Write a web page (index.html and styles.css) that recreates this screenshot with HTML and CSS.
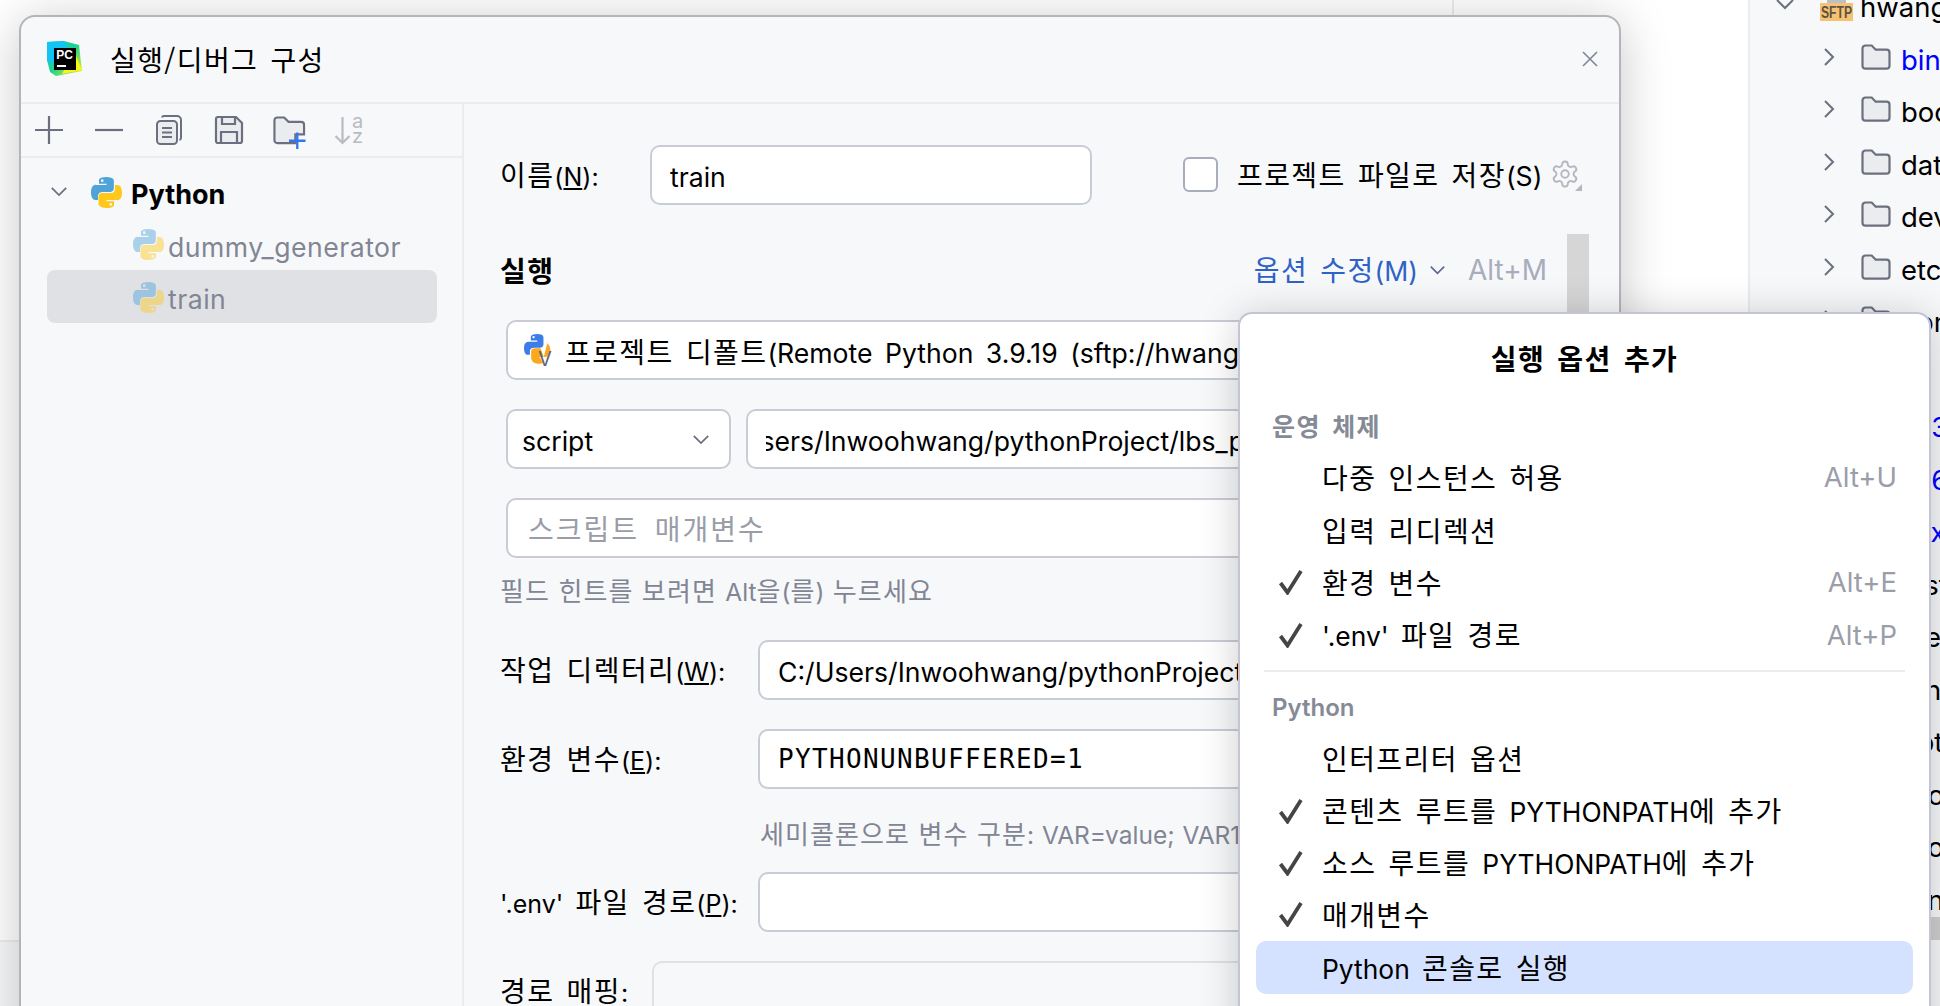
FILE: index.html
```html
<!DOCTYPE html>
<html lang="ko">
<head>
<meta charset="utf-8">
<title>실행/디버그 구성</title>
<link rel="stylesheet" href="styles.css">
</head>
<body>
<svg class="defs" width="0" height="0" aria-hidden="true">
  <defs>
    <symbol id="py" viewBox="0 0 24 24">
      <path fill="#4fa3d6" fill-rule="evenodd" d="M11.9 0C5.8 0 6.2 2.6 6.2 2.6v2.7h5.8v.8H3.9S0 5.7 0 11.9s3.4 6 3.4 6h2v-2.9s-.1-3.4 3.4-3.4h5.7s3.2.1 3.2-3.1V3.2S18.3 0 11.9 0zM8.7 1.8a1 1 0 1 1 0 2.1 1 1 0 0 1 0-2.1z"/>
      <path fill="#ffc81a" fill-rule="evenodd" d="M12.1 24c6.1 0 5.7-2.6 5.7-2.6v-2.7h-5.8v-.8h8.1s3.9.4 3.9-5.8-3.4-6-3.4-6h-2v2.9s.1 3.4-3.4 3.4H9s-3.2-.1-3.2 3.1v5.3S5.7 24 12.1 24zm3.2-1.8a1 1 0 1 1 0-2.1 1 1 0 0 1 0 2.1z"/>
    </symbol>
    <symbol id="folder" viewBox="0 0 30 26">
      <path fill="#ebecf0" stroke="#6c707e" stroke-width="2.200" d="M1.5 4.500a3 3 0 0 1 3-3h6.200l4 4.200h10.800a3 3 0 0 1 3 3v13a3 3 0 0 1-3 3h-21a3 3 0 0 1-3-3z"/>
    </symbol>
    <symbol id="chev-r" viewBox="0 0 12 20">
      <path fill="none" stroke="#6c707e" stroke-width="2" d="M2 2l8 8-8 8"/>
    </symbol>
    <symbol id="chev-d" viewBox="0 0 20 12">
      <path fill="none" stroke="#6c707e" stroke-width="2" d="M2 2l8 8 8-8"/>
    </symbol>
    <symbol id="check" viewBox="0 0 26 26">
      <path fill="none" stroke="#454545" stroke-width="3.800" d="M2.500 14l7 9.500L23 2"/>
    </symbol>
  </defs>
</svg>

<div class="ide">
  <div class="editor">
    <div class="editor-rule"></div>
    <div class="editor-foot"></div>
  </div>
  <div class="project">
    <div class="tree-row tree-root">
      <svg class="tree-down"><use href="#chev-d"/></svg>
      <svg class="sftp" viewBox="0 0 33 30">
        <rect x="7" y="0" width="19" height="12" fill="#b9c0c9"/>
        <rect x="0" y="12" width="33" height="18" fill="#f5c271"/>
        <text x="1" y="27" class="sftp-text" textLength="31" lengthAdjust="spacingAndGlyphs">SFTP</text>
      </svg>
      <span class="tree-name">hwang</span>
    </div>
    <div class="tree-row"><svg class="tree-chev"><use href="#chev-r"/></svg><svg class="tree-folder"><use href="#folder"/></svg><span class="tree-name link">bin</span></div>
    <div class="tree-row"><svg class="tree-chev"><use href="#chev-r"/></svg><svg class="tree-folder"><use href="#folder"/></svg><span class="tree-name">boot</span></div>
    <div class="tree-row"><svg class="tree-chev"><use href="#chev-r"/></svg><svg class="tree-folder"><use href="#folder"/></svg><span class="tree-name">data</span></div>
    <div class="tree-row"><svg class="tree-chev"><use href="#chev-r"/></svg><svg class="tree-folder"><use href="#folder"/></svg><span class="tree-name">dev</span></div>
    <div class="tree-row"><svg class="tree-chev"><use href="#chev-r"/></svg><svg class="tree-folder"><use href="#folder"/></svg><span class="tree-name">etc</span></div>
    <div class="tree-row"><svg class="tree-chev"><use href="#chev-r"/></svg><svg class="tree-folder"><use href="#folder"/></svg><span class="tree-name">home</span></div>
    <div class="tree-row"><svg class="tree-chev"><use href="#chev-r"/></svg><svg class="tree-folder"><use href="#folder"/></svg><span class="tree-name link">lib</span></div>
    <div class="tree-row"><svg class="tree-chev"><use href="#chev-r"/></svg><svg class="tree-folder"><use href="#folder"/></svg><span class="tree-name link">lib32</span></div>
    <div class="tree-row"><svg class="tree-chev"><use href="#chev-r"/></svg><svg class="tree-folder"><use href="#folder"/></svg><span class="tree-name link">lib64</span></div>
    <div class="tree-row"><svg class="tree-chev"><use href="#chev-r"/></svg><svg class="tree-folder"><use href="#folder"/></svg><span class="tree-name link">libx32</span></div>
    <div class="tree-row"><svg class="tree-chev"><use href="#chev-r"/></svg><svg class="tree-folder"><use href="#folder"/></svg><span class="tree-name">lost+found</span></div>
    <div class="tree-row"><svg class="tree-chev"><use href="#chev-r"/></svg><svg class="tree-folder"><use href="#folder"/></svg><span class="tree-name">media</span></div>
    <div class="tree-row"><svg class="tree-chev"><use href="#chev-r"/></svg><svg class="tree-folder"><use href="#folder"/></svg><span class="tree-name">mnt</span></div>
    <div class="tree-row"><svg class="tree-chev"><use href="#chev-r"/></svg><svg class="tree-folder"><use href="#folder"/></svg><span class="tree-name">opt</span></div>
    <div class="tree-row"><svg class="tree-chev"><use href="#chev-r"/></svg><svg class="tree-folder"><use href="#folder"/></svg><span class="tree-name">proc</span></div>
    <div class="tree-row"><svg class="tree-chev"><use href="#chev-r"/></svg><svg class="tree-folder"><use href="#folder"/></svg><span class="tree-name">root</span></div>
    <div class="tree-row"><svg class="tree-chev"><use href="#chev-r"/></svg><svg class="tree-folder"><use href="#folder"/></svg><span class="tree-name">run</span></div>
    <div class="project-scroll"></div>
  </div>
</div>

<section class="dialog">
  <header class="dialog-head">
    <svg class="logo" viewBox="0 0 35 35">
      <defs>
        <linearGradient id="lg" x1="0" y1="0" x2="1" y2="1">
          <stop offset="0" stop-color="#13c5f2"/>
          <stop offset=".5" stop-color="#1fd38c"/>
          <stop offset="1" stop-color="#fcf21c"/>
        </linearGradient>
      </defs>
      <path fill="url(#lg)" d="M0 1l17-1 15 4 3 26-26 5-6-4-3-12z"/>
      <path fill="#13c5f2" d="M0 1l17-1 4 8-16 14-5-2z"/>
      <path fill="#fcf21c" d="M27 10l8 19-20 4z"/>
      <rect x="7" y="7" width="22" height="22" fill="#000"/>
      <text x="9.200" y="18.400" class="logo-text">PC</text>
      <rect x="10" y="24" width="9" height="2" fill="#fff"/>
    </svg>
    <h1 class="dialog-title">실행/디버그 구성</h1>
    <svg class="close" viewBox="0 0 16 16"><path fill="none" stroke="#818594" stroke-width="1.600" d="M1 1l14 14M15 1L1 15"/></svg>
  </header>
  <div class="dialog-body">
    <aside class="side">
      <div class="toolbar">
        <svg class="tool" viewBox="0 0 30 30"><path fill="none" stroke="#6c707e" stroke-width="2.200" d="M15 1v28M1 15h28"/></svg>
        <svg class="tool" viewBox="0 0 30 30"><path fill="none" stroke="#6c707e" stroke-width="2.200" d="M1 15h28"/></svg>
        <svg class="tool" viewBox="0 0 30 30"><g fill="none" stroke="#6c707e" stroke-width="2"><rect x="3" y="6" width="20" height="23" rx="3.500" fill="#ebecf0"/><path d="M8 2.500a2 2 0 0 1 2-1.500h13a4 4 0 0 1 4 4v18a2 2 0 0 1-1.500 2"/><path d="M8 13h10M8 17.500h10M8 22h10"/></g></svg>
        <svg class="tool" viewBox="0 0 30 30"><g fill="none" stroke="#6c707e" stroke-width="2.200"><path d="M4 2h18l6 6v18a2 2 0 0 1-2 2H4a2 2 0 0 1-2-2V4a2 2 0 0 1 2-2z" fill="#ebecf0"/><path d="M8 2v7h13V2M7 28V17h16v11"/></g></svg>
        <svg class="tool tool-folder" viewBox="0 0 34 34"><path fill="#ebecf0" stroke="#6c707e" stroke-width="2.200" d="M1.500 4.500a3 3 0 0 1 3-3h7l4.500 4.500h13a3 3 0 0 1 3 3v10h-9v9h-18.500a3 3 0 0 1-3-3z"/><path fill="none" stroke="#3574f0" stroke-width="2.400" d="M25 17v17M16.500 25.500h17"/></svg>
        <svg class="tool" viewBox="0 0 30 30"><path fill="none" stroke="#b9bbc2" stroke-width="2.200" d="M8.500 2v26M1.500 21l7 7 7-7"/><text x="18" y="13" class="sort-text">a</text><text x="18" y="28" class="sort-text">z</text></svg>
      </div>
      <div class="configs">
        <div class="config config-group">
          <svg class="group-chev"><use href="#chev-d"/></svg>
          <svg class="py"><use href="#py"/></svg>
          <strong class="en group-name">Python</strong>
        </div>
        <div class="config config-item">
          <svg class="py py-temp"><use href="#py"/></svg>
          <span class="en">dummy_generator</span>
        </div>
        <div class="config config-item is-selected">
          <svg class="py py-temp"><use href="#py"/></svg>
          <span class="en">train</span>
        </div>
      </div>
    </aside>

    <main class="form">
      <div class="row row-name">
        <label class="label label-name">이름<span class="en">(<u>N</u>):</span></label>
        <div class="field field-name"><span class="en">train</span></div>
        <span class="checkbox"></span>
        <span class="store">프로젝트 파일로 저장<span class="en">(S)</span></span>
        <svg class="gear" viewBox="0 0 32 32">
          <g transform="scale(1.250)" fill="none" stroke="#b4b7c0" stroke-width="1.500">
            <path d="M12.220 2h-.44a2 2 0 0 0-2 2v.18a2 2 0 0 1-1 1.730l-.43.250a2 2 0 0 1-2 0l-.15-.08a2 2 0 0 0-2.730.730l-.22.380a2 2 0 0 0 .730 2.730l.15.100a2 2 0 0 1 1 1.720v.510a2 2 0 0 1-1 1.740l-.15.090a2 2 0 0 0-.730 2.730l.22.380a2 2 0 0 0 2.730.730l.15-.08a2 2 0 0 1 2 0l.43.250a2 2 0 0 1 1 1.730V20a2 2 0 0 0 2 2h.44a2 2 0 0 0 2-2v-.18a2 2 0 0 1 1-1.730l.43-.25a2 2 0 0 1 2 0l.15.080a2 2 0 0 0 2.730-.730l.22-.39a2 2 0 0 0-.73-2.730l-.15-.08a2 2 0 0 1-1-1.740v-.5a2 2 0 0 1 1-1.740l.15-.09a2 2 0 0 0 .73-2.730l-.22-.38a2 2 0 0 0-2.730-.73l-.15.08a2 2 0 0 1-2 0l-.43-.25a2 2 0 0 1-1-1.730V4a2 2 0 0 0-2-2z"/>
            <circle cx="12" cy="12" r="3"/>
          </g>
          <path fill="#b4b7c0" d="M32 25v7h-7z"/>
        </svg>
      </div>

      <div class="row row-run">
        <h2 class="run-title">실행</h2>
        <span class="options">옵션 수정<span class="en">(M)</span></span>
        <svg class="options-chev" viewBox="0 0 20 12"><path fill="none" stroke="#5a6a8e" stroke-width="2" d="M2 2l8 8 8-8"/></svg>
        <span class="en options-key">Alt+M</span>
      </div>
      <div class="scroll-thumb"></div>

      <div class="field field-wide field-interp">
        <svg class="interp" viewBox="0 0 33 33">
          <g transform="scale(1.100)">
            <path fill="#3d7de8" fill-rule="evenodd" d="M11.900 0C5.800 0 6.200 3 6.200 3v3h5.800v1H3.900S0 6.700 0 12.900s3.400 6 3.400 6h2v-3s-.1-3.400 3.400-3.400h5.700s3.200.1 3.200-3.100V3.200S18.300 0 11.900 0zM8.700 1.800a1 1 0 1 1 0 2.100 1 1 0 0 1 0-2.100z"/>
            <path fill="#f9a91c" d="M20 8.500s4 .4 4 6.500c0 5-3 6-6 6l-3-8h-5c-2 0-3.500 1-3.500 3v5.500S6.700 27 13 27c2 0 3.500-.3 4.500-.7L14 21h4l3-12z"/>
          </g>
          <text x="14" y="32" class="interp-v">V</text>
        </svg>
        <span class="interp-text">프로젝트 디폴트<span class="en">(Remote Python 3.9.19 (sftp://hwang@192.168.0.10:22/home/hwang/miniconda3/bin/python))</span></span>
      </div>

      <div class="row row-script">
        <div class="field field-combo">
          <span class="en">script</span>
          <svg class="combo-chev"><use href="#chev-d"/></svg>
        </div>
        <div class="field field-path"><span class="clip"><span class="en path-text">C:/Users/Inwoohwang/pythonProject/lbs_pytorch/train.py</span></span></div>
      </div>

      <div class="field field-wide field-params"><span class="placeholder">스크립트&nbsp; 매개변수</span></div>

      <p class="hint hint-alt">필드 힌트를 보려면 <span class="en">Alt</span>을<span class="en">(</span>를<span class="en">)</span> 누르세요</p>

      <div class="row row-cwd">
        <label class="label label-long">작업 디렉터리<span class="en">(<u>W</u>):</span></label>
        <div class="field field-long"><span class="en">C:/Users/Inwoohwang/pythonProject/lbs_pytorch</span></div>
      </div>
      <div class="row row-env">
        <label class="label label-long">환경 변수<span class="en">(<u>E</u>):</span></label>
        <div class="field field-long field-mono"><span class="mono">PYTHONUNBUFFERED=1</span></div>
      </div>
      <p class="hint hint-env">세미콜론으로 변수 구분<span class="en">: VAR=value; VAR1=value1</span></p>
      <div class="row row-dotenv">
        <label class="label label-long"><span class="en">'.env'</span> 파일 경로<span class="en">(<u>P</u>):</span></label>
        <div class="field field-long"></div>
      </div>
      <div class="row row-map">
        <label class="label label-map">경로 매핑<span class="en">:</span></label>
        <div class="map-box"></div>
      </div>
    </main>
  </div>
</section>

<section class="popup">
  <h3 class="popup-title">실행 옵션 추가</h3>
  <div class="section-name section-first">운영 체제</div>
  <div class="opt"><span class="opt-check"></span><span>다중 인스턴스 허용</span><span class="en opt-key">Alt+U</span></div>
  <div class="opt"><span class="opt-check"></span><span>입력 리디렉션</span></div>
  <div class="opt"><svg class="opt-check"><use href="#check"/></svg><span>환경 변수</span><span class="en opt-key">Alt+E</span></div>
  <div class="opt"><svg class="opt-check"><use href="#check"/></svg><span><span class="en">'.env'</span> 파일 경로</span><span class="en opt-key">Alt+P</span></div>
  <div class="popup-sep"></div>
  <div class="section-name en-section">Python</div>
  <div class="opt"><span class="opt-check"></span><span>인터프리터 옵션</span></div>
  <div class="opt"><svg class="opt-check"><use href="#check"/></svg><span>콘텐츠 루트를 <span class="en">PYTHONPATH</span>에 추가</span></div>
  <div class="opt"><svg class="opt-check"><use href="#check"/></svg><span>소스 루트를 <span class="en">PYTHONPATH</span>에 추가</span></div>
  <div class="opt opt-tight"><svg class="opt-check"><use href="#check"/></svg><span>매개변수</span></div>
  <div class="opt opt-hover"><span class="opt-check"></span><span><span class="en">Python</span> 콘솔로 실행</span></div>
</section>
</body>
</html>
```

FILE: styles.css
```css
* { box-sizing: border-box; }

html, body {
  margin: 0;
  height: 100%;
}

body {
  position: relative;
  width: 1940px;
  height: 1006px;
  overflow: hidden;
  background: #fff;
  color: #000;
  font-family: "Noto Sans CJK KR", "Inter", sans-serif;
  font-size: 28px;
  letter-spacing: 1.4px;
  word-spacing: 3px;
  line-height: 36px;
}

.en {
  font-family: "Inter", "Noto Sans CJK KR", sans-serif;
  font-size: 26.6px;
  letter-spacing: 0;
  word-spacing: 3px;
}

h1, h2, h3, p { margin: 0; font-size: inherit; }
.defs { position: absolute; }

/* IDE behind the dialog */
.ide {
  display: flex;
  height: 100%;
}

.editor {
  position: relative;
  flex: 1;
  display: flex;
  flex-direction: column;
  justify-content: flex-end;
}

.editor-rule {
  position: absolute;
  left: 1452px;
  top: 0;
  width: 2px;
  height: 20px;
  background: #ebecf0;
}

.editor-foot {
  height: 66px;
  background: #f7f8fa;
  border-top: 2px solid #ebecf0;
}

.project {
  position: relative;
  width: 192px;
  overflow: hidden;
  background: #f7f8fa;
  border-left: 2px solid #ebecf0;
  font-family: "Inter", sans-serif;
  font-size: 27.5px;
  letter-spacing: 0;
  word-spacing: 0;
}

.tree-row {
  display: flex;
  align-items: center;
  height: 52.5px;
  padding-left: 73px;
  white-space: nowrap;
}

.tree-root {
  margin-top: -22px;
  padding-left: 25px;
}

.tree-name { padding-top: 6px; }
.tree-down { width: 20px; height: 12px; margin-right: 22px; flex: none; }
.sftp { width: 33px; height: 30px; margin: 4px 7px 0 3px; flex: none; }
.sftp-text { font: 700 16px "Liberation Sans", sans-serif; letter-spacing: 0; fill: #5d5346; }
.tree-chev { width: 12px; height: 20px; flex: none; }
.tree-folder { width: 30px; height: 26px; margin: 0 10px 0 26px; flex: none; }
.link { color: #0000ff; }

.project-scroll {
  position: absolute;
  left: 0;
  right: 0;
  top: 917px;
  height: 23px;
  background: #cfcfcf;
}

/* Dialog */
.dialog {
  position: absolute;
  left: 19px;
  top: 15px;
  width: 1602px;
  height: 1040px;
  background: #f7f8fa;
  border: 2px solid #b4b5b9;
  border-radius: 16px;
  box-shadow: 0 6px 50px rgba(0, 0, 0, .22);
}

.dialog-head {
  display: flex;
  align-items: center;
  height: 87px;
  padding: 0 21px 2px 26px;
  border-bottom: 2px solid #ebecf0;
}

.logo { width: 35px; height: 35px; margin-right: 28px; flex: none; }
.logo-text { font: 700 12px "Liberation Sans", sans-serif; letter-spacing: 0; fill: #fff; }
.dialog-title { font-weight: 400; font-size: 28px; }
.close { width: 16px; height: 16px; margin-left: auto; }

.dialog-body { display: flex; }

.side {
  width: 443px;
  min-height: 950px;
  border-right: 2px solid #ebecf0;
  flex: none;
}

.toolbar {
  display: flex;
  align-items: center;
  gap: 30px;
  height: 54px;
  padding-left: 13px;
  border-bottom: 2px solid #ebecf0;
}

.tool { width: 30px; height: 30px; flex: none; }
.tool-folder { width: 33px; height: 33px; margin: 4px -2px 0 -1px; }
.sort-text { font: 400 20px "Inter", sans-serif; letter-spacing: 0; fill: #b9bbc2; }

.configs { padding: 7px 25px 0 26px; }

.config {
  display: flex;
  align-items: center;
  height: 52.5px;
  border-radius: 8px;
}

.config .en { padding-top: 6px; }
.config-group { padding-left: 3px; }
.config-group .en { padding-top: 7px; }
.group-chev { width: 18px; height: 11px; margin-right: 23px; flex: none; }
.py { width: 31px; height: 31px; margin-top: 2px; flex: none; }
.group-name { margin-left: 9px; font-weight: 700; font-size: 27px; }
.config-item { padding-left: 86px; gap: 4px; color: #818594; }
.config-item .en { letter-spacing: .5px; }
.py-temp { opacity: .45; }
.is-selected { background: #dfe1e5; }

/* Form */
.form {
  position: relative;
  flex: 1;
  min-width: 0;
  padding: 41px 72px 0 36px;
}

.row { display: flex; align-items: center; }

.label { white-space: nowrap; flex: none; padding-top: 1px; }
.label .en { font-size: 25px; word-spacing: 0; }
.label-name { width: 150px; }
.label-long { width: 258px; }
.label-map { width: 152px; margin-top: 10px; }

.field {
  display: flex;
  align-items: center;
  height: 60px;
  padding: 4px 18px 0;
  background: #fff;
  border: 2px solid #c9ccd6;
  border-radius: 10px;
  white-space: nowrap;
  overflow: hidden;
  flex: none;
}

.field-name { width: 442px; }

.checkbox {
  width: 35px;
  height: 35px;
  margin: -2px 19px 0 91px;
  background: #fff;
  border: 2px solid #a8adbd;
  border-radius: 6px;
  flex: none;
}

.store { white-space: nowrap; margin-top: -1px; }
.gear { width: 32px; height: 32px; margin: 0 0 0 8px; flex: none; }

.row-run { height: 40px; margin-top: 45px; }
.run-title { font-weight: 700; font-size: 28px; margin-right: auto; }
.options { color: #2f62c6; white-space: nowrap; }
.options-chev { width: 17px; height: 10px; margin: 0 22px 0 11px; flex: none; }
.options-key { color: #a8adbd; word-spacing: 0; font-size: 28px; }

.scroll-thumb {
  position: absolute;
  left: 1103px;
  top: 130px;
  width: 22px;
  height: 100px;
  background: #d6d6d6;
}

.field-wide { width: 1054px; margin-left: 6px; }
.field-interp { margin-top: 30px; padding-left: 16px; }
.field-interp .en { word-spacing: 5px; }
.interp { width: 33px; height: 33px; margin: -4px 8px 0 0; flex: none; }
.interp-v { font: 400 20px "Inter", sans-serif; letter-spacing: 0; fill: #5f6472; }

.row-script { margin-top: 29px; margin-left: 6px; }
.field-combo { width: 225px; padding-left: 14px; justify-content: space-between; }
.combo-chev { width: 18px; height: 11px; margin: -4px 1px 0 0; }
.field-path { width: 814px; margin-left: 15px; }
.clip { display: block; width: 100%; overflow: hidden; }
.path-text { display: block; margin-left: -62px; }

.field-params { margin-top: 29px; padding: 0 20px; }
.placeholder { color: #9a9da8; word-spacing: -2px; letter-spacing: 2px; }

.hint {
  height: 30px;
  line-height: 30px;
  font-size: 26px;
  letter-spacing: 1.1px;
  word-spacing: 0;
  color: #818594;
  white-space: nowrap;
}

.hint .en { font-size: 24.5px; word-spacing: 1px; }
.hint-alt { margin-top: 17px; }
.hint-env { margin: 29px 0 0 260px; }

.field-long { width: 802px; }
.field-mono { padding-top: 0; }
.row-cwd { margin-top: 35px; }
.row-env { margin-top: 29px; }
.row-dotenv { margin-top: 24px; }
.row-map { margin-top: 29px; align-items: flex-start; }
.mono { font-family: "DejaVu Sans Mono", monospace; font-size: 26px; letter-spacing: 1.35px; word-spacing: 0; }

.map-box {
  width: 908px;
  height: 120px;
  border: 2px solid #dfe1e5;
  border-radius: 10px;
}

/* Popup */
.popup {
  position: absolute;
  left: 1238px;
  top: 312px;
  width: 693px;
  height: 740px;
  padding: 0 16px;
  background: #fff;
  border: 2px solid #c3c5d4;
  border-radius: 14px;
  box-shadow: 0 4px 40px rgba(0, 0, 0, .2);
}

.popup-title {
  height: 88px;
  padding-top: 26px;
  text-align: center;
  font-weight: 700;
  font-size: 28px;
}

.section-name {
  display: flex;
  align-items: center;
  height: 50px;
  padding-left: 16px;
  font-size: 25px;
  font-weight: 700;
  color: #858a96;
}

.section-first { padding-bottom: 4px; }
.en-section { font-family: "Inter", sans-serif; font-size: 24px; font-weight: 600; letter-spacing: 0; }

.opt {
  display: flex;
  align-items: center;
  height: 52.5px;
  padding: 0 16px 2px 0;
  border-radius: 10px;
  white-space: nowrap;
}

.opt-check { width: 26px; height: 26px; margin: 0 18px 0 22px; flex: none; }
.opt-key { margin-left: auto; color: #9a9ea9; word-spacing: 0; font-size: 27.5px; }
.opt .en:not(.opt-key) { font-size: 26.4px; word-spacing: 0; }
.popup-sep { height: 2px; margin: 8px 8px 11px 8px; background: #ebecf0; }
.opt-tight { padding-bottom: 6px; }
.opt-hover { height: 53px; margin-top: -2px; padding: 1px 16px 0 0; background: #d4e2ff; }
```
